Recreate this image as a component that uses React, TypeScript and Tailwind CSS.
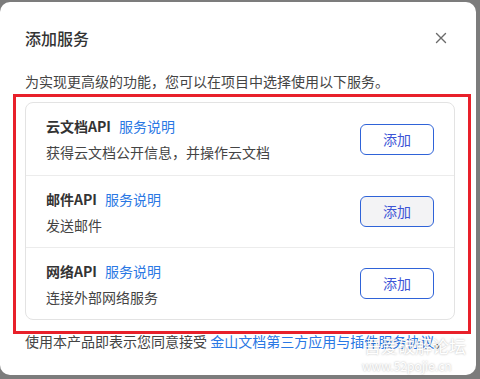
import React from "react";

const services = [
  { name: "云文档API", desc: "获得云文档公开信息，并操作云文档", hover: false },
  { name: "邮件API", desc: "发送邮件", hover: true },
  { name: "网络API", desc: "连接外部网络服务", hover: false },
];

export default function App() {
  return (
    <div
      className="w-[480px] h-[379px] bg-[#7c7c7c] pt-[2px] overflow-hidden"
      style={{ fontFamily: '"Noto Sans CJK SC", "Noto Sans", sans-serif' }}
    >
      <div className="relative w-[476px] h-[373px] bg-white rounded-[10px] px-[25px] pt-[24px]">
        <div className="flex items-center justify-between h-[24px]">
          <div className="text-[16px] leading-[24px] font-medium text-[#333]">添加服务</div>
          <svg width="12" height="12" viewBox="0 0 12 12" className="mr-[4px]">
            <path d="M1.5 1.5 L10.5 10.5 M10.5 1.5 L1.5 10.5" stroke="#6b6b6b" strokeWidth="1.4" strokeLinecap="round" />
          </svg>
        </div>
        <div className="mt-[21px] text-[14px] leading-[20px] text-[#444]">
          为实现更高级的功能，您可以在项目中选择使用以下服务。
        </div>
        <div className="mt-[11px] w-[430px] border border-[#e3e3e3] rounded-[8px]">
          {services.map((s, i) => (
            <div
              key={s.name}
              className={`flex items-center justify-between pl-[20px] pr-[20px] h-[72px] ${i > 0 ? "border-t border-[#ececec]" : ""}`}
            >
              <div className="flex flex-col gap-[6px]">
                <div className="flex items-center gap-[8px] text-[14px] leading-[20px]">
                  <span className="font-bold text-[#333]">{s.name}</span>
                  <span className="text-[#2a78e4]">服务说明</span>
                </div>
                <div className="text-[14px] leading-[20px] text-[#444]">{s.desc}</div>
              </div>
              <button
                className={`w-[74px] h-[31px] rounded-[6px] border border-[#2f63d8] text-[14px] text-[#3d55d6] ${s.hover ? "bg-[#f3f3f5]" : "bg-white"}`}
              >
                添加
              </button>
            </div>
          ))}
        </div>
        <div className="mt-[11px] text-[14px] leading-[20px] text-[#444] whitespace-nowrap">
          使用本产品即表示您同意接受 <span className="text-[#2a78e4]">金山文档第三方应用与插件服务协议</span>。
        </div>

        <div className="absolute left-[13px] top-[92px] w-[458px] h-[240px] border-[3px] border-[#e8202a] pointer-events-none" />

        <div
          className="absolute left-[364px] top-[334px] text-[17px] leading-[20px] text-white whitespace-nowrap opacity-90"
          style={{ textShadow: "0 0 2px rgba(0,0,0,0.35)" }}
        >
          吾爱破解论坛
        </div>
        <div
          className="absolute left-[362px] top-[357px] text-[12px] leading-[14px] text-white whitespace-nowrap opacity-90"
          style={{ textShadow: "0 0 2px rgba(0,0,0,0.35)" }}
        >
          www.52pojie.cn
        </div>
      </div>
    </div>
  );
}
